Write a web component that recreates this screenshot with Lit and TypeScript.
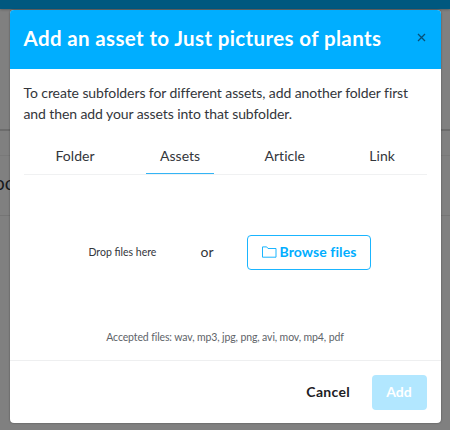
import { LitElement, html, css } from "lit";
import { classMap } from "lit/directives/class-map.js";

class AppRoot extends LitElement {
  static properties = { active: { state: true } };
  declare active: string;

  static styles = css`
    :host {
      display: block;
      position: relative;
      width: 450px;
      height: 430px;
      overflow: hidden;
      background: #808080;
      color: #33363b;
      font-family: Lato, "Liberation Sans", sans-serif;
      font-size: 14px;
      box-sizing: border-box;
    }
    * { box-sizing: border-box; }
    .page { height: 100%; display: flex; flex-direction: column; }
    .topbar { flex: none; height: 9px; background: #00587f; box-shadow: 0 0 3px rgba(0, 0, 0, 0.5); }
    .band { flex: none; height: 122px; border-bottom: 2px solid #6c6c6c; }
    .row { flex: none; height: 25px; border-bottom: 1px solid #797979; }
    .entry {
      flex: none;
      height: 60px;
      padding-bottom: 7px;
      border-bottom: 1px solid #757575;
      display: flex;
      align-items: center;
      color: #17191c;
      font-size: 19px;
      text-indent: -6px;
    }
    .modal {
      position: absolute;
      left: 9.5px;
      top: 9.5px;
      width: 431px;
      height: 413.5px;
      display: flex;
      flex-direction: column;
      background: #fff;
      border-radius: 4px;
      overflow: hidden;
      box-shadow: 0 0 2px rgba(0, 0, 0, 0.45);
    }
    header {
      flex: none;
      height: 59.5px;
      padding: 0 15px 0 14px;
      display: flex;
      align-items: center;
      justify-content: space-between;
      background: #00aeff;
      color: #fff;
    }
    h1 { margin: 0; padding-bottom: 2px; font-size: 20.5px; line-height: 26px; font-weight: 700; letter-spacing: 0.37px; white-space: nowrap; }
    .close { width: 9px; height: 9px; margin-bottom: 3px; }
    .body { flex: 1; padding: 13px 14px 0 14px; display: flex; flex-direction: column; }
    p { margin: 0; line-height: 21px; letter-spacing: -0.09px; white-space: nowrap; }
    .tabs {
      height: 36.5px;
      margin-top: 14px;
      display: flex;
      justify-content: space-between;
      padding: 0 17.5px 0 18px;
      border-bottom: 1px solid #f0f1f2;
    }
    .tab { padding: 0 14px; line-height: 35px; letter-spacing: 0.04px; border-bottom: 1px solid transparent; }
    .tab.on { margin-left: 1px; border-bottom-color: #33b4f5; }
    .drop { margin-top: 60px; height: 35px; padding-left: 65px; display: flex; align-items: center; }
    .hint { width: 112px; padding-bottom: 1px; font-size: 10.5px; }
    .or { width: 46.5px; padding-bottom: 1px; }
    .browse {
      width: 124px;
      height: 35px;
      display: flex;
      align-items: center;
      justify-content: center;
      gap: 3px;
      border: 1px solid #1ab5ff;
      border-radius: 4px;
      color: #00aeff;
      font-weight: 700;
      letter-spacing: 0.08px;
    }
    .browse span { padding-bottom: 1px; }
    .accepted { margin-top: 59.5px; text-align: center; font-size: 10.5px; line-height: 16px; letter-spacing: -0.12px; color: #606469; white-space: nowrap; }
    footer {
      flex: none;
      height: 63px;
      padding: 0 14px 0 0;
      display: flex;
      align-items: center;
      justify-content: flex-end;
      gap: 21.5px;
      border-top: 1px solid #eeeff0;
      font-weight: 700;
    }
    .cancel { padding-bottom: 1px; color: #1d2024; letter-spacing: 0.3px; }
    .add { width: 55px; height: 35px; line-height: 34px; text-align: center; color: #fff; background: #b2e7ff; border-radius: 4px; }
  `;

  constructor() {
    super();
    this.active = "Assets";
  }

  render() {
    return html`
      <div class="page">
        <div class="topbar"></div>
        <div class="band"></div>
        <div class="row"></div>
        <div class="entry">oc</div>
      </div>
      <div class="modal">
        <header>
          <h1>Add an asset to Just pictures of plants</h1>
          <svg class="close" viewBox="0 0 9 9" fill="none" stroke="#075078" stroke-width="1.3">
            <path d="M1 1l7 7M8 1l-7 7" />
          </svg>
        </header>
        <div class="body">
          <p>To create subfolders for different assets, add another folder first<br />and then add your assets into that subfolder.</p>
          <div class="tabs">
            ${["Folder", "Assets", "Article", "Link"].map(
              (name) => html`<div
                class=${classMap({ tab: true, on: name === this.active })}
                @click=${() => (this.active = name)}
              >${name}</div>`
            )}
          </div>
          <div class="drop">
            <div class="hint">Drop files here</div>
            <div class="or">or</div>
            <div class="browse">
              <svg width="15" height="12" viewBox="0 0 15 12" fill="none" stroke="#1ab5ff" stroke-width="1">
                <path d="M.5 11.2V.9h4.2l1.3 1.6h8v8.7z" />
              </svg>
              <span>Browse files</span>
            </div>
          </div>
          <div class="accepted">Accepted files: wav, mp3, jpg, png, avi, mov, mp4, pdf</div>
        </div>
        <footer>
          <div class="cancel">Cancel</div>
          <div class="add">Add</div>
        </footer>
      </div>
    `;
  }
}
customElements.define("app-root", AppRoot);
